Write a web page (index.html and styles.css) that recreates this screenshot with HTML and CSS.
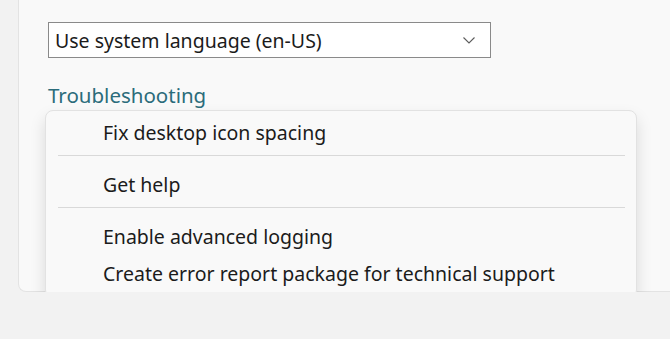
FILE: index.html
```html
<!DOCTYPE html>
<html lang="en">
<head>
  <meta charset="UTF-8" />
  <title>Settings - Troubleshooting</title>
  <link rel="stylesheet" href="styles.css">
</head>
<body>
  <div class="card">
    <!-- Language picker -->
    <div class="select-box">
      <span>Use system language (en-US)</span>
      <svg class="chevron" width="12" height="7" viewBox="0 0 12 7">
        <path d="M0.5 0.5 L6 6 L11.5 0.5" fill="none" stroke="#5c5c5c" stroke-width="1.1" />
      </svg>
    </div>

    <h2 class="section-title">Troubleshooting</h2>

    <!-- Open flyout menu -->
    <div class="menu">
      <div class="menu-item">Fix desktop icon spacing</div>
      <div class="menu-sep"></div>
      <div class="menu-item">Get help</div>
      <div class="menu-sep"></div>
      <div class="menu-item">Enable advanced logging</div>
      <div class="menu-item">Create error report package for technical support</div>
    </div>
  </div>
</body>
</html>
```
FILE: styles.css
```css
body {
  margin: 0;
  background-color: #f2f2f2;
  font-family: "Noto Sans", "Open Sans", sans-serif;
  color: #1b1b1b;
  overflow: hidden;
}

/* Settings card, its top runs off screen */
.card {
  margin-left: 18px;
  height: 292px;
  box-sizing: border-box;
  padding: 22px 0 0 29px;
  background-color: #f9f9f9;
  border: 1px solid #e3e3e3;
  border-top: none;
  border-right: none;
  border-bottom-left-radius: 8px;
}

.select-box {
  width: 443px;
  height: 36px;
  box-sizing: border-box;
  display: flex;
  align-items: center;
  justify-content: space-between;
  padding: 0 15px 0 6px;
  background-color: #fff;
  border: 1px solid #8a8a8a;
  font-size: 19.5px;
}

.section-title {
  margin: 23px 0 0 0;
  font-size: 20.5px;
  font-weight: normal;
  color: #2b6c7b;
  line-height: 28px;
}

.menu {
  margin: 1px 0 0 -3px;
  width: 592px;
  box-sizing: border-box;
  padding: 8px 11px 9px 12px;
  background-color: #f9f9f9;
  border: 1px solid #e2e2e2;
  border-radius: 8px;
  box-shadow: 0 8px 16px rgba(0, 0, 0, 0.13);
}

.menu-item {
  padding-left: 45px;
  height: 28px;
  line-height: 28px;
  font-size: 19.5px;
  margin: 0 0 8px 0;
}

.menu-item:last-child {
  margin: 9px 0 0 0;
}

.menu-sep {
  height: 1px;
  background-color: #d9d9d9;
  margin: 0 0 15px 0;
}
```
